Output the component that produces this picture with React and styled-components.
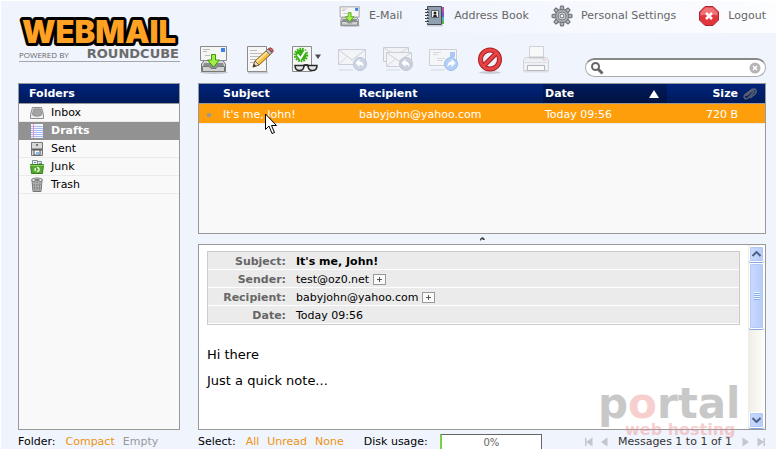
import React from "react";
import styled, { createGlobalStyle, css } from "styled-components";

const GlobalStyle = createGlobalStyle`
  * {
    box-sizing: border-box;
  }
  body {
    margin: 0;
    background: #f0f4fd;
    color: #000;
    font: 11px/16px Verdana, "DejaVu Sans", sans-serif;
  }
  a {
    text-decoration: none;
  }
  button {
    margin: 0;
    padding: 0;
    border: 0;
    background: none;
    font: inherit;
  }
  svg {
    display: block;
  }
`;

/* ---------- icons ---------- */

function InboxDownIcon({ size = 32, viewBox = "0 0 32 32" }) {
  return (
    <svg width={size} height={size} viewBox={viewBox} aria-hidden="true">
      <ellipse cx="16" cy="28.500" rx="14" ry="1.500" fill="#c5c9d0" />
      <path d="M3.500 20l3-4h18l3 4v7.500h-24z" fill="#d5d7d7" stroke="#777" />
      <path d="M6 19h19l1 3h-5l-2 2h-7l-2-2H5z" fill="#8c8e8e" />
      <path d="M2.500 2.500h26v14h-26z" fill="#f5f5f5" stroke="#8a8a8a" />
      <path d="M5 5.500h7M5 7.500h4M7 11.500h5" stroke="#bbb" />
      <rect x="23" y="4" width="4" height="4" fill="#3a81ea" />
      <path d="M4.500 22.500H11l2 2h5l2-2h6.500v5h-22z" fill="#d0d2d2" stroke="#777" />
      <path d="M13.500 10.500h4v5.500h4l-6 7-6-7h4z" fill="#a5ee48" stroke="#3c9a10" />
    </svg>
  );
}

function ComposeIcon() {
  return (
    <svg width="32" height="32" viewBox="0 0 32 32" aria-hidden="true">
      <path d="M4 28.500h20" stroke="#c5c9d0" strokeWidth="2" />
      <path d="M3.500 2.500h19v25h-19z" fill="#f6f6f6" stroke="#8c8c8c" />
      <path d="M6 6.500h7M6 9.500h12M6 12.500h11M6 15.500h7M6 18.500h4" stroke="#bcbcbc" />
      <path d="M9 23l2-6L23 6l4 4-12 11z" fill="#f7bd3d" stroke="#896225" />
      <path d="M12.500 18L24 7.500" stroke="#ffe29a" strokeWidth="2" />
      <path d="M9 23l2-6 4 4z" fill="#f0dcbc" stroke="#7b6b50" />
      <path d="M9 23l1-3 2 2z" fill="#222" />
      <path d="M22 7l2-2 4 4-2 2z" fill="#bbb" stroke="#777" />
      <path d="M24.500 4.500q2-1.500 4 .5 1.500 2 0 3.500z" fill="#df6060" stroke="#9a4545" />
    </svg>
  );
}

function MarkIcon() {
  return (
    <svg width="32" height="32" viewBox="0 0 32 32" aria-hidden="true">
      <path d="M2.500 2.500h19v25h-19z" fill="#f7f7f7" stroke="#8c8c8c" />
      <circle cx="11" cy="11" r="5.500" fill="#38b014" />
      <circle cx="11" cy="11" r="6" fill="none" stroke="#38b014" strokeWidth="2.500" strokeDasharray="1.600 1" />
      <path d="M7.500 10.500l3 4 5-8" fill="none" stroke="#fff" strokeWidth="2" />
      <path d="M5 21.500h9q0 5-4.500 5T5 21.500zM18 21.500h9q0 5-4.500 5t-4.500-5z" fill="#e4e8e8" stroke="#292929" strokeWidth="1.500" />
      <path d="M13 22q3-2 6 0" fill="none" stroke="#292929" strokeWidth="2" />
      <path d="M25 10.500h6L28 15z" fill="#4a4a4a" />
    </svg>
  );
}

function ReplyIcon() {
  return (
    <svg width="32" height="32" viewBox="0 0 32 32" aria-hidden="true">
      <path d="M3 26h14" stroke="#e2e6ed" strokeWidth="2" />
      <path d="M2.500 5.500h27v15h-27z" fill="#f2f4f7" stroke="#cccfd6" />
      <path d="M3 20l9-8M29 20l-9-8" stroke="#d6d9df" />
      <path d="M3 6l13 10L29 6" fill="none" stroke="#cccfd6" />
      <circle cx="24" cy="20" r="6.500" fill="#ccd4e5" stroke="#bcc6d8" />
      <path d="M19.500 19l4-4v2.500q4 0 4 5.500-1-2.500-4-2.500V23z" fill="#fff" />
    </svg>
  );
}

function ReplyAllIcon() {
  return (
    <svg width="32" height="32" viewBox="0 0 32 32" aria-hidden="true">
      <path d="M4 26h14" stroke="#e2e6ed" strokeWidth="2" />
      <path d="M1.500 3.500h25v14h-25z" fill="#f0f2f5" stroke="#c9ccd3" />
      <path d="M2 4l12 7 12-7" fill="none" stroke="#d3d6dc" />
      <path d="M4.500 8.500h25v14h-25z" fill="#f2f4f7" stroke="#cccfd6" />
      <path d="M5 22l8-7M29 22l-8-7" stroke="#d6d9df" />
      <path d="M5 9l12 8L29 9" fill="none" stroke="#cccfd6" />
      <circle cx="24" cy="20" r="6.500" fill="#ccd0dd" stroke="#bfc5d3" />
      <path d="M19.500 19l4-4v2.500q4 0 4 5.500-1-2.500-4-2.500V23z" fill="#fff" />
    </svg>
  );
}

function ForwardIcon() {
  return (
    <svg width="32" height="32" viewBox="0 0 32 32" aria-hidden="true">
      <path d="M3 26h14" stroke="#e2e6ed" strokeWidth="2" />
      <path d="M1.500 5.500h27v16h-27z" fill="#f5f6f8" stroke="#cccfd6" />
      <path d="M5 8.500h8M5 10.500h5M9 14.500h8M9 16.500h6" stroke="#d7d9de" />
      <rect x="22" y="8" width="5" height="5" fill="#a9c8f5" />
      <circle cx="23" cy="20" r="6.500" fill="#b5d0f6" stroke="#98bceb" />
      <path d="M27.500 19l-4-4v2.500q-4 0-4 5.500 1-2.500 4-2.500V23z" fill="#fff" />
    </svg>
  );
}

function DeleteIcon() {
  return (
    <svg width="32" height="32" viewBox="0 0 32 32" aria-hidden="true">
      <ellipse cx="16" cy="28.500" rx="11" ry="1.500" fill="#c9cdd5" />
      <circle cx="16" cy="15.500" r="9.500" fill="#eef1f5" stroke="#a81d1f" strokeWidth="5" />
      <path d="M9.500 22L22.500 9" stroke="#a81d1f" strokeWidth="5" />
      <circle cx="16" cy="15.500" r="9.500" fill="none" stroke="#e84345" strokeWidth="3" />
      <path d="M9.500 22L22.500 9" stroke="#e84345" strokeWidth="3" />
    </svg>
  );
}

function PrintIcon() {
  return (
    <svg width="32" height="32" viewBox="0 0 32 32" aria-hidden="true">
      <path d="M3 27.500h26" stroke="#dde1e8" strokeWidth="2" />
      <path d="M5.500 13.500h21l2 3v10h-25v-10z" fill="#eef0f3" stroke="#cfd2d8" />
      <path d="M9.500 2.500h14v11h-14z" fill="#f7f8fa" stroke="#cfd2d8" />
      <path d="M9 13.500h15" stroke="#c4c8ce" strokeWidth="2" />
      <path d="M4 18.500h24" stroke="#dcdfe4" />
      <path d="M7.500 21.500h17v5h-17z" fill="#f9fafb" stroke="#b2b5bb" />
      <path d="M23 16h3" stroke="#f0b9b9" />
    </svg>
  );
}

function AddressBookIcon() {
  return (
    <svg width="22" height="22" viewBox="0 0 22 22" aria-hidden="true">
      <path d="M3 20.500h16" stroke="#c9ccd2" strokeWidth="2" />
      <path d="M17 2h3v5h-3z" fill="#c84bb0" />
      <path d="M17 7h3v5h-3z" fill="#7a50c8" />
      <path d="M17 12h3v4h-3z" fill="#42b8ab" />
      <path d="M17 16h3v3h-3z" fill="#62b545" />
      <path d="M3.500 1.500h14v18h-14z" fill="#91a0b0" stroke="#424e5b" />
      <path d="M7.500 5.500h7v7h-7z" fill="#f3f3f3" stroke="#5b6570" />
      <circle cx="11" cy="8" r="1.500" fill="#222" />
      <path d="M9 12q0-2.500 2-2.500t2 2.500z" fill="#222" />
      <path d="M1 4.500h4M1 7.500h4M1 10.500h4M1 13.500h4M1 16.500h4" stroke="#444" />
      <path d="M2 5.500h2M2 8.500h2M2 11.500h2M2 14.500h2M2 17.500h2" stroke="#e4e7eb" />
    </svg>
  );
}

function GearIcon() {
  const teeth = [0, 45, 90, 135, 180, 225, 270, 315];
  return (
    <svg width="22" height="22" viewBox="0 0 22 22" aria-hidden="true">
      {teeth.map((angle) => (
        <path
          key={angle}
          d="M9 4.500L9.500 1h3l.5 3.500z"
          fill="#aeb1b7"
          stroke="#696c72"
          transform={`rotate(${angle} 11 11)`}
        />
      ))}
      <circle cx="11" cy="11" r="6.500" fill="#acafb5" stroke="#74777d" />
      <circle cx="11" cy="11" r="4" fill="#dde0e5" stroke="#777a80" />
      <circle cx="11" cy="11" r="2" fill="#f6f8fd" stroke="#65686d" />
    </svg>
  );
}

function LogoutIcon() {
  return (
    <svg width="22" height="22" viewBox="0 0 22 22" aria-hidden="true">
      <path d="M7 1.500h8l5.500 5.500v8L15 20.500H7L1.500 15V7z" fill="#e2363e" stroke="#a9272d" />
      <path d="M7.500 2.500h7l5 5v3q-8-2-17 0v-3z" fill="#f07378" />
      <path d="M8 8l6 6M14 8l-6 6" stroke="#fff" strokeWidth="2.500" />
    </svg>
  );
}

function FolderIcon({ kind }) {
  return (
    <svg width="16" height="16" viewBox="0 0 16 16" aria-hidden="true">
      {kind === "inbox" && (
        <>
          <path d="M3.500 2.500h9l2 7v4h-13v-4z" fill="#dedede" stroke="#8d8d8d" />
          <path d="M5 4h6.500l1.500 5-2 2H5L3.500 9z" fill="#a4a4a4" stroke="#909090" />
          <path d="M2 11h3l1 1h4l1-1h3v2H2z" fill="#f2f2f2" />
        </>
      )}
      {kind === "drafts" && (
        <>
          <path d="M2 1h12v14H2z" fill="#f3f7ff" />
          <path d="M2 3.500h12M2 5.500h12M2 7.500h12M2 9.500h12M2 11.500h12M2 13.500h12" stroke="#a4baf0" />
          <path d="M4.500 1v14" stroke="#f08ec2" />
        </>
      )}
      {kind === "sent" && (
        <>
          <path d="M2.500 1.500h11v13h-11z" fill="#d9d9d9" stroke="#777" />
          <path d="M3 8.500h10" stroke="#666" strokeWidth="2" />
          <path d="M5 9h6v5H5z" fill="#f9f9f9" stroke="#555" />
          <circle cx="8" cy="4" r="1" fill="#555" />
          <path d="M7 11h3v3H7z" fill="#87b7ef" />
        </>
      )}
      {kind === "junk" && (
        <>
          <path d="M3.500 1.500h5v5h-5zM8.500 2.500h4v4h-4z" fill="#e8eef2" stroke="#858d91" />
          <path d="M5 3.500h2M10 4.500h2" stroke="#5d94d0" />
          <path d="M1.500 5.500h13l-1 9h-11z" fill="#53a72e" stroke="#38811c" />
          <path d="M1 6.500h14" stroke="#8dce65" />
          <circle cx="8" cy="10.500" r="2" fill="none" stroke="#e6fadb" strokeWidth="1.500" strokeDasharray="3 1.200" />
        </>
      )}
      {kind === "trash" && (
        <>
          <path d="M3 3.500h10l-1 11H4z" fill="#c5c5c5" stroke="#777" />
          <path d="M5 5l1 9M8 5v9M11 5l-1 9M4 8h8M4 11h8" stroke="#858585" />
          <ellipse cx="8" cy="3" rx="5.500" ry="2" fill="#e9e9e9" stroke="#777" />
          <ellipse cx="8" cy="3" rx="3" ry="1" fill="#777" />
        </>
      )}
    </svg>
  );
}

function ClipIcon() {
  return (
    <svg width="16" height="14" viewBox="0 0 16 14" fill="none" aria-hidden="true">
      <path
        d="M4 9l6-5q2-1 2 1l-6 6q-3 2-4-1 0-2 2-3l5-4q3-2 5 0 1 2-1 4l-5 4"
        stroke="#5b6270"
        strokeWidth="1.500"
      />
    </svg>
  );
}

function PagerIcon({ flip, bar }) {
  return (
    <svg width="9" height="10" viewBox="0 0 9 10" aria-hidden="true">
      <g fill="#c3c6ce" transform={flip ? "rotate(180 4.500 5)" : undefined}>
        <path d="M8.500 .5v9L2 5z" />
        {bar && <path d="M1 1h1.500v8H1z" />}
      </g>
    </svg>
  );
}

function Pointer() {
  return (
    <PointerSvg width="13" height="22" viewBox="0 0 13 22" aria-hidden="true">
      <path
        d="M.5 1v15.500L4 13l3 7.500 2.500-1L6.500 12.500H11.500z"
        fill="#fff"
        stroke="#000"
      />
    </PointerSvg>
  );
}

function Logo() {
  return (
    <LogoSvg width="162" height="46" viewBox="0 0 162 46" role="img" aria-label="Webmail powered by RoundCube">
      <text
        x="4"
        y="26"
        fontFamily="Inter, sans-serif"
        fontSize="31"
        fontWeight="900"
        fill="#ffa122"
        stroke="#000"
        strokeWidth="6"
        strokeLinejoin="round"
        paintOrder="stroke"
      >
        WEBMAIL
      </text>
      <text x="1" y="41" fontFamily="'Open Sans', sans-serif" fontSize="8" fill="#666">POWERED BY</text>
      <text x="161" y="41" textAnchor="end" fontFamily="'DejaVu Sans', sans-serif" fontSize="13" fontWeight="700" fill="#6b6b6b">ROUNDCUBE</text>
      <path d="M1 44.500h161" stroke="#a5a7ab" />
    </LogoSvg>
  );
}

/* ---------- page ---------- */

const toolbar = [
  { label: "Check for new messages", Icon: InboxDownIcon },
  { label: "Create a new message", Icon: ComposeIcon },
  { label: "Mark messages", Icon: MarkIcon },
  { label: "Reply", Icon: ReplyIcon },
  { label: "Reply to all", Icon: ReplyAllIcon },
  { label: "Forward", Icon: ForwardIcon },
  { label: "Delete", Icon: DeleteIcon },
  { label: "Print", Icon: PrintIcon },
];

const folders = [
  { kind: "inbox", name: "Inbox" },
  { kind: "drafts", name: "Drafts", selected: true },
  { kind: "sent", name: "Sent" },
  { kind: "junk", name: "Junk" },
  { kind: "trash", name: "Trash" },
];

const headers = [
  { label: "Subject:", value: "It's me, John!", strong: true },
  { label: "Sender:", value: "test@oz0.net", add: true },
  { label: "Recipient:", value: "babyjohn@yahoo.com", add: true },
  { label: "Date:", value: "Today 09:56" },
];

export default function App() {
  return (
    <Page>
      <GlobalStyle />
      <Sidebar>
        <Logo />
        <FolderPanel>
          <PanelTitle>Folders</PanelTitle>
          <FolderList>
            {folders.map((folder) => (
              <FolderItem key={folder.kind} $selected={folder.selected}>
                <a href="#">
                  <FolderIcon kind={folder.kind} />
                  {folder.name}
                </a>
              </FolderItem>
            ))}
          </FolderList>
        </FolderPanel>
        <Footer>
          <FooterLabel>Folder:</FooterLabel>
          <FooterLink href="#">Compact</FooterLink>
          <FooterLink href="#" $disabled>Empty</FooterLink>
        </Footer>
      </Sidebar>

      <Main>
        <Taskbar>
          <a href="#"><InboxDownIcon size={22} viewBox="1 0 30 30" />E-Mail</a>
          <a href="#"><AddressBookIcon />Address Book</a>
          <a href="#"><GearIcon />Personal Settings</a>
          <a href="#"><LogoutIcon />Logout</a>
        </Taskbar>

        <Toolbar>
          {toolbar.map(({ label, Icon }) => (
            <button key={label} type="button" aria-label={label}>
              <Icon />
            </button>
          ))}
          <Search>
            <svg width="14" height="14" viewBox="0 0 14 14" fill="none" stroke="#666" aria-hidden="true">
              <circle cx="5.500" cy="5.500" r="3.500" strokeWidth="2" />
              <path d="M8 8l4.500 4.500" strokeWidth="3" />
            </svg>
            <input type="text" aria-label="Search messages" />
            <button type="button" aria-label="Reset search">
              <svg width="12" height="12" viewBox="0 0 12 12" aria-hidden="true">
                <circle cx="6" cy="6" r="5.500" fill="#b5b5b5" />
                <path d="M4 4l4 4M8 4l-4 4" stroke="#fff" strokeWidth="1.500" />
              </svg>
            </button>
          </Search>
        </Toolbar>

        <ListPanel>
          <MessageTable>
            <colgroup>
              <Col $width={22} />
              <Col $width={136} />
              <col />
              <Col $width={124} />
              <Col $width={73} />
              <Col $width={25} />
            </colgroup>
            <thead>
              <tr>
                <HeadCell aria-label="Status" />
                <HeadCell>Subject</HeadCell>
                <HeadCell>Recipient</HeadCell>
                <HeadCell $sorted aria-sort="ascending">
                  <SortLabel>
                    Date
                    <svg width="10" height="8" viewBox="0 0 10 8" aria-hidden="true">
                      <path d="M5 0l5 8H0z" fill="#fff" />
                    </svg>
                  </SortLabel>
                </HeadCell>
                <HeadCell $right>Size</HeadCell>
                <HeadCell aria-label="Attachment"><ClipIcon /></HeadCell>
              </tr>
            </thead>
            <tbody>
              <tr>
                <Cell><StatusDot /></Cell>
                <Cell>It's me, John!</Cell>
                <Cell>babyjohn@yahoo.com</Cell>
                <Cell>Today 09:56</Cell>
                <Cell $right>720 B</Cell>
                <Cell />
              </tr>
            </tbody>
          </MessageTable>
          <Pointer />
        </ListPanel>

        <Splitter>
          <svg width="6" height="4" viewBox="0 0 6 4" aria-hidden="true">
            <path d="M1 2l2-2 2 1 1 2H4L3 2 1 4z" fill="#444" />
          </svg>
        </Splitter>

        <Preview>
          <Message>
            <HeaderTable>
              <tbody>
                {headers.map((row) => (
                  <tr key={row.label}>
                    <th scope="row">{row.label}</th>
                    <td>
                      <HeaderValue $strong={row.strong}>
                        {row.value}
                        {row.add && (
                          <AddButton type="button" aria-label="Add to address book">
                            <svg width="5" height="5" viewBox="0 0 5 5" aria-hidden="true">
                              <path d="M0 2.500h5M2.500 0v5" stroke="#555" />
                            </svg>
                          </AddButton>
                        )}
                      </HeaderValue>
                    </td>
                  </tr>
                ))}
              </tbody>
            </HeaderTable>
            <MessageBody>
              <p>Hi there</p>
              <p>Just a quick note...</p>
            </MessageBody>
          </Message>
          <Scrollbar>
            <ScrollButton type="button" aria-label="Scroll up">
              <svg width="9" height="6" viewBox="0 0 9 6" fill="none" aria-hidden="true">
                <path d="M.5 5l4-4 4 4" stroke="#4d6185" strokeWidth="2" />
              </svg>
            </ScrollButton>
            <ScrollThumb />
            <ScrollButton type="button" aria-label="Scroll down" $last>
              <svg width="9" height="6" viewBox="0 0 9 6" fill="none" aria-hidden="true">
                <path d="M.5 1l4 4 4-4" stroke="#4d6185" strokeWidth="2" />
              </svg>
            </ScrollButton>
          </Scrollbar>
        </Preview>

        <Footer>
          <FooterLabel>Select:</FooterLabel>
          <FooterLink href="#">All</FooterLink>
          <FooterLink href="#">Unread</FooterLink>
          <FooterLink href="#">None</FooterLink>
          <QuotaLabel>Disk usage:</QuotaLabel>
          <Quota>0%</Quota>
          <Pager>
            <button type="button" aria-label="First page"><PagerIcon bar /></button>
            <button type="button" aria-label="Previous page"><PagerIcon /></button>
            <span>Messages 1 to 1 of 1</span>
            <button type="button" aria-label="Next page"><PagerIcon flip /></button>
            <button type="button" aria-label="Last page"><PagerIcon flip bar /></button>
          </Pager>
        </Footer>
      </Main>

      <Watermark width="152" height="60" viewBox="0 0 152 60" role="img" aria-label="portal web hosting">
        <g fontFamily="'DejaVu Sans', sans-serif" fontWeight="700">
          <text x="2" y="37" fontSize="42" fill="#777">
            p<tspan fill="#e88">o</tspan>rtal
          </text>
          <text x="29" y="54" fontSize="16" fill="#e88">web hosting</text>
        </g>
      </Watermark>
    </Page>
  );
}

const Page = styled.div`
  position: relative;
  display: flex;
  gap: 18px;
  height: 100vh;
  padding: 0 10px 0 17px;
  overflow: hidden;
  border: solid #fff;
  border-width: 1px 0 1px 1px;
  background: linear-gradient(100deg, #f0f4fd 50%, #fcfdff) top / 100% 32px no-repeat, #f0f4fd;
`;

const Sidebar = styled.aside`
  display: flex;
  flex: none;
  flex-direction: column;
  width: 162px;
`;

const Main = styled.main`
  display: flex;
  flex: 1;
  flex-direction: column;
  min-width: 0;
`;

const LogoSvg = styled.svg`
  flex: none;
  margin: 16px 0 20px;
`;

const panel = css`
  border: 1px solid #999;
  background: #f9f9f9;
`;

const navy = "linear-gradient(#00237c, #001a59)";

const FolderPanel = styled.nav`
  ${panel}
  flex: 1;
`;

const PanelTitle = styled.h2`
  height: 20px;
  margin: 0;
  padding: 2px 10px;
  border-bottom: 1px solid #999;
  background: ${navy};
  color: #fff;
  font-size: 11px;
  line-height: 16px;
`;

const FolderList = styled.ul`
  margin: 0;
  padding: 0;
  list-style: none;
`;

const FolderItem = styled.li`
  height: 18px;
  border-bottom: 1px solid ${(p) => (p.$selected ? "#929292" : "#ebebeb")};
  background: ${(p) => (p.$selected ? "#929292" : "transparent")};
  font-weight: ${(p) => (p.$selected ? 700 : 400)};

  a {
    display: flex;
    align-items: center;
    gap: 6px;
    padding: 1px 0 0 10px;
    color: ${(p) => (p.$selected ? "#fff" : "#000")};
  }
`;

const Taskbar = styled.nav`
  display: flex;
  flex: none;
  align-items: center;
  justify-content: flex-end;
  gap: 22px;
  height: 30px;

  a {
    display: flex;
    align-items: center;
    gap: 8px;
    color: #666;
    white-space: nowrap;
  }
`;

const Toolbar = styled.div`
  display: flex;
  flex: none;
  align-items: center;
  gap: 14px;
  height: 52px;
  padding-top: 6px;
`;

const Search = styled.div`
  display: flex;
  align-items: center;
  gap: 4px;
  width: 181px;
  height: 19px;
  margin: 14px 0 0 auto;
  padding: 0 4px;
  border: 1px solid #aaa;
  border-top: 2px solid #888;
  border-radius: 10px;
  background: #fff;

  svg {
    flex: none;
  }
  input {
    flex: 1;
    min-width: 0;
    height: 14px;
    padding: 0;
    border: 0;
    outline: 0;
    background: transparent;
    font: inherit;
  }
`;

const ListPanel = styled.section`
  ${panel}
  position: relative;
  flex: none;
  height: 151px;
`;

const MessageTable = styled.table`
  width: 100%;
  table-layout: fixed;
  border-collapse: separate;
  border-spacing: 0;
`;

const Col = styled.col`
  width: ${(p) => p.$width}px;
`;

const HeadCell = styled.th`
  height: 20px;
  padding: 0 2px;
  border-bottom: 1px solid #999;
  background: ${(p) => (p.$sorted ? "linear-gradient(#001b5c, #001240)" : navy)};
  color: #fff;
  text-align: ${(p) => (p.$right ? "right" : "left")};
`;

const SortLabel = styled.span`
  display: flex;
  align-items: center;
  justify-content: space-between;
  padding-right: 6px;
`;

const Cell = styled.td`
  height: 20px;
  padding: 2px 2px 0;
  border-bottom: 1px solid #ebebeb;
  background: #ff9e0b;
  color: #fff;
  text-align: ${(p) => (p.$right ? "right" : "left")};
  white-space: nowrap;
`;

const StatusDot = styled.span`
  display: block;
  width: 4px;
  height: 4px;
  margin-left: 6px;
  border-radius: 1px;
  background: #999;
`;

const PointerSvg = styled.svg`
  position: absolute;
  top: 29px;
  left: 66px;
`;

const Splitter = styled.div`
  display: flex;
  flex: none;
  align-items: center;
  justify-content: center;
  height: 10px;
`;

const Preview = styled.section`
  ${panel}
  display: flex;
  flex: 1;
  min-height: 0;
  background: #fff;
`;

const Message = styled.article`
  flex: 1;
  min-width: 0;
  padding: 6px 8px;
`;

const HeaderTable = styled.table`
  width: 100%;
  border: 1px solid #ccc;
  border-spacing: 0;
  background: #ebebeb;
  line-height: 15px;

  th,
  td {
    height: 18px;
    padding: 2px 0 0;
    border-bottom: 1px solid #fff;
  }
  th {
    width: 88px;
    padding-right: 10px;
    color: #666;
    text-align: right;
  }
`;

const HeaderValue = styled.div`
  display: flex;
  align-items: center;
  gap: 4px;
  font-weight: ${(p) => (p.$strong ? 700 : 400)};
`;

const AddButton = styled.button`
  display: flex;
  align-items: center;
  justify-content: center;
  width: 13px;
  height: 11px;
  border: 1px solid #999;
  background: #fafafa;
`;

const MessageBody = styled.div`
  padding-top: 20px;
  font-size: 13px;
  line-height: 20px;

  p {
    margin: 0 0 6px;
  }
`;

const Scrollbar = styled.div`
  display: flex;
  flex: none;
  flex-direction: column;
  width: 17px;
  padding: 1px;
  background: linear-gradient(90deg, #eeede5, #fefefb);
`;

const xpBlue = css`
  border: 1px solid #fff;
  border-radius: 2px;
  background: linear-gradient(90deg, #cbdafd, #b5cbfa);
  box-shadow: inset 0 0 0 1px #b4c8f6, 0 1px 0 #86a6e0;
`;

const ScrollButton = styled.button`
  ${xpBlue}
  display: flex;
  align-items: center;
  justify-content: center;
  width: 15px;
  height: 16px;
  margin-top: ${(p) => (p.$last ? "auto" : "0")};
`;

const ScrollThumb = styled.div`
  ${xpBlue}
  display: flex;
  align-items: center;
  justify-content: center;
  height: 66px;
  margin-top: 1px;

  &::before {
    width: 6px;
    height: 8px;
    background: repeating-linear-gradient(#eef4fe 0 1px, #8cb0f8 1px 2px);
    content: "";
  }
`;

const Footer = styled.footer`
  display: flex;
  flex: none;
  align-items: flex-start;
  height: 19px;
  padding-top: 4px;
  white-space: nowrap;
`;

const FooterLabel = styled.span`
  margin-right: 10px;
`;

const FooterLink = styled.a`
  margin-right: 8px;
  color: ${(p) => (p.$disabled ? "#999" : "#ee9310")};
`;

const QuotaLabel = styled.span`
  margin: 0 12px;
`;

const Quota = styled.div`
  width: 102px;
  height: 17px;
  border: 1px solid #666;
  border-left: 2px solid #79cf4a;
  background: #fff;
  color: #666;
  font-size: 10px;
  text-align: center;
`;

const Pager = styled.div`
  display: flex;
  align-items: center;
  gap: 6px;
  margin-left: auto;
  color: #333;

  span {
    margin: 0 4px;
  }
`;

const Watermark = styled.svg`
  position: absolute;
  right: 28px;
  bottom: 8px;
  overflow: visible;
  opacity: 0.4;
  pointer-events: none;
`;
